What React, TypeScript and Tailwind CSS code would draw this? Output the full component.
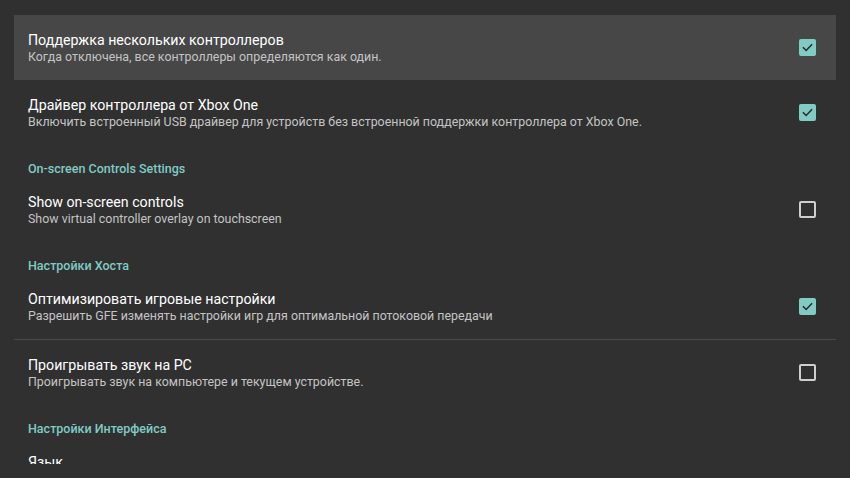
import React from "react";

type Item =
  | { kind: "pref"; title: string; summary?: string; checked?: boolean; focused?: boolean; divider?: boolean }
  | { kind: "cat"; title: string };

const items: Item[] = [
  { kind: "pref", title: "Поддержка нескольких контроллеров", summary: "Когда отключена, все контроллеры определяются как один.", checked: true, focused: true },
  { kind: "pref", title: "Драйвер контроллера от Xbox One", summary: "Включить встроенный USB драйвер для устройств без встроенной поддержки контроллера от Xbox One.", checked: true },
  { kind: "cat", title: "On-screen Controls Settings" },
  { kind: "pref", title: "Show on-screen controls", summary: "Show virtual controller overlay on touchscreen", checked: false },
  { kind: "cat", title: "Настройки Хоста" },
  { kind: "pref", title: "Оптимизировать игровые настройки", summary: "Разрешить GFE изменять настройки игр для оптимальной потоковой передачи", checked: true, divider: true },
  { kind: "pref", title: "Проигрывать звук на PC", summary: "Проигрывать звук на компьютере и текущем устройстве.", checked: false },
  { kind: "cat", title: "Настройки Интерфейса" },
  { kind: "pref", title: "Язык" },
];

function Checkbox({ checked }: { checked: boolean }) {
  if (checked) {
    return (
      <div className="w-[17px] h-[17px] rounded-[2px] bg-[#80cbc4] flex items-center justify-center">
        <svg width="13" height="13" viewBox="0 0 24 24">
          <path d="M4.5 12.5l5 5L19.5 7" fill="none" stroke="#2a2a2a" strokeWidth="2.8" strokeLinecap="square" />
        </svg>
      </div>
    );
  }
  return <div className="w-[17px] h-[17px] rounded-[2px] border-2 border-[#cfcfcf]" />;
}

export default function App() {
  return (
    <div
      className="w-[850px] h-[478px] overflow-hidden bg-[#303030]"
      style={{ fontFamily: "Roboto, 'Noto Sans', sans-serif" }}
    >
      <div className="h-[464px] overflow-hidden pt-[15px]">
        {items.map((it, i) =>
          it.kind === "cat" ? (
            <div key={i} className="mx-[14px] px-[14px] pt-[16px] h-[32px]">
              <div className="text-[12.5px] leading-[16px] font-medium text-[#80cbc4]">{it.title}</div>
            </div>
          ) : (
            <div key={i} className={it.divider ? "mx-[14px] border-b border-[#4a4a4a]" : "mx-[14px]"}>
              <div
                className={
                  "flex items-center h-[65px] px-[14px] " + (it.focused ? "bg-[#474747]" : "")
                }
              >
                <div className="flex-1 min-w-0 self-start pt-[16px]">
                  <div className="text-[14.2px] leading-[18px] text-white whitespace-nowrap">{it.title}</div>
                  {it.summary && (
                    <div className="text-[12.4px] leading-[16px] text-[#c4c4c4] whitespace-nowrap">{it.summary}</div>
                  )}
                </div>
                {it.checked !== undefined && (
                  <div className="w-[40px] flex justify-end pr-[6px]">
                    <Checkbox checked={it.checked} />
                  </div>
                )}
              </div>
            </div>
          )
        )}
      </div>
    </div>
  );
}
